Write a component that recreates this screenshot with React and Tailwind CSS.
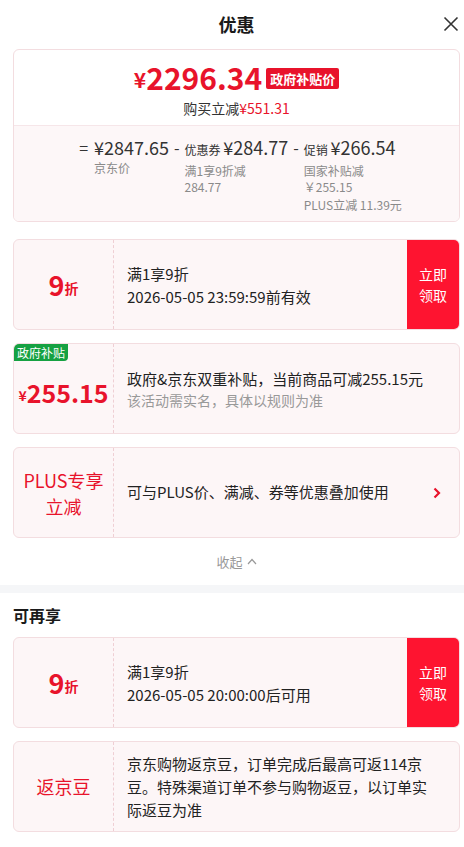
import React from 'react';

const RED = 'text-[#e8132b]';

const CouponCard = ({ time }) => (
  <div className="flex h-[91px] rounded-[6px] border border-[#f3dde0] bg-[#fdf6f7] overflow-hidden">
    <div className="w-[100px] shrink-0 flex items-center justify-center border-r border-dashed border-[#efcfd4]">
      <span className={`${RED} font-bold text-[27px] leading-none`}>9</span>
      <span className={`${RED} font-bold text-[14px] leading-none mt-[6px]`}>折</span>
    </div>
    <div className="flex-1 flex flex-col justify-center pl-[13px] text-[15px] leading-[23px] text-[#222]">
      <div>满1享9折</div>
      <div>{time}</div>
    </div>
    <div className="w-[52px] shrink-0 bg-[#fe1430] flex items-center justify-center text-white text-[14px] leading-[21px] text-center">
      <div>
        <div>立即</div>
        <div>领取</div>
      </div>
    </div>
  </div>
);

export default function App() {
  return (
    <div className="w-[464px] bg-white font-['Noto_Sans_CJK_SC',sans-serif] text-[#222]">
      <div className="pl-[13px] pr-[4px]">
        {/* header */}
        <div className="relative h-[49px] flex items-center justify-center">
          <span className="text-[18px] font-bold text-[#1a1a1a]">优惠</span>
          <svg className="absolute right-[1px] top-[16px]" width="16" height="16" viewBox="0 0 16 16" fill="none" stroke="#333" strokeWidth="1.6">
            <path d="M1.5 1.5 L14.5 14.5 M14.5 1.5 L1.5 14.5" />
          </svg>
        </div>

        {/* summary */}
        <div className="rounded-[6px] border border-[#f3dde0] overflow-hidden">
          <div className="h-[75px] flex flex-col items-center pt-[6px]">
            <div className="flex items-center h-[42px]">
              <span className={`${RED} font-bold text-[21px] leading-[42px] mt-[3px]`}>¥</span>
              <span className={`${RED} font-bold text-[30px] leading-[42px]`}>2296.34</span>
              <span className="ml-[4px] mt-[2px] bg-[#e8132b] text-white text-[13px] font-bold leading-[21px] px-[4px] rounded-[2px]">政府补贴价</span>
            </div>
            <div className="text-[14px] leading-[20px] text-[#333]">
              购买立减<span className={RED}>¥551.31</span>
            </div>
          </div>
          <div className="h-[96px] bg-[#fdf7f8] border-t border-[#f6e6e9] flex justify-center pt-[8px] pl-[8px]">
            <div className="flex">
              <span className="text-[16px] text-[#333] leading-[26px] mr-[6px]">=</span>
              <div>
                <div className="text-[18px] leading-[26px] text-[#333]">¥2847.65</div>
                <div className="text-[12px] leading-[16px] text-[#8a8a8a]">京东价</div>
              </div>
            </div>
            <div className="flex ml-[5px]">
              <span className="text-[16px] text-[#333] leading-[26px] mr-[5px]">-</span>
              <div>
                <div className="leading-[26px] text-[#333]">
                  <span className="text-[12px]">优惠券 </span>
                  <span className="text-[18px]">¥284.77</span>
                </div>
                <div className="text-[12px] leading-[16px] text-[#8a8a8a]">满1享9折减</div>
                <div className="text-[12px] leading-[16px] text-[#8a8a8a]">284.77</div>
              </div>
            </div>
            <div className="flex ml-[5px]">
              <span className="text-[16px] text-[#333] leading-[26px] mr-[5px]">-</span>
              <div>
                <div className="leading-[26px] text-[#333]">
                  <span className="text-[12px]">促销 </span>
                  <span className="text-[18px]">¥266.54</span>
                </div>
                <div className="text-[12px] leading-[16px] text-[#8a8a8a]">国家补贴减</div>
                <div className="text-[12px] leading-[16px] text-[#8a8a8a]">￥255.15</div>
                <div className="text-[12px] leading-[16px] text-[#8a8a8a] mt-[2px]">PLUS立减 11.39元</div>
              </div>
            </div>
          </div>
        </div>

        <div className="mt-[17px] flex flex-col gap-[13px]">
          <CouponCard time="2026-05-05 23:59:59前有效" />

          <div className="relative flex h-[91px] rounded-[6px] border border-[#f3dde0] bg-[#fdf6f7] overflow-hidden">
            <span className="absolute left-0 top-0 bg-[#16a142] text-white text-[12px] leading-[17px] px-[3px] rounded-br-[4px]">政府补贴</span>
            <div className="w-[100px] shrink-0 flex items-center justify-center border-r border-dashed border-[#efcfd4] pt-[8px]">
              <span className={`${RED} font-bold text-[14px] leading-none mt-[4px]`}>¥</span>
              <span className={`${RED} font-bold text-[25px] leading-none`}>255.15</span>
            </div>
            <div className="flex-1 flex flex-col justify-center pl-[13px] pt-[2px]">
              <div className="text-[15px] leading-[22px] text-[#222] whitespace-nowrap">政府&京东双重补贴，当前商品可减255.15元</div>
              <div className="text-[14px] leading-[21px] text-[#999]">该活动需实名，具体以规则为准</div>
            </div>
          </div>

          <div className="flex h-[91px] rounded-[6px] border border-[#f3dde0] bg-[#fdf6f7] overflow-hidden">
            <div className={`w-[100px] shrink-0 flex items-center justify-center border-r border-dashed border-[#efcfd4] text-center text-[18px] leading-[26px] ${RED}`}>
              PLUS专享<br />立减
            </div>
            <div className="flex-1 flex items-center pl-[13px] text-[15px] text-[#222]">
              可与PLUS价、满减、券等优惠叠加使用
            </div>
            <div className="w-[26px] flex items-center">
              <svg width="8" height="12" viewBox="0 0 8 12" fill="none" stroke="#e8132b" strokeWidth="2.2">
                <path d="M1.5 1.5 L6 6 L1.5 10.5" />
              </svg>
            </div>
          </div>
        </div>

        <div className="h-[47px] flex items-center justify-center text-[13px] text-[#999] gap-[4px]">
          <span>收起</span>
          <svg width="10" height="7" viewBox="0 0 10 7" fill="none" stroke="#999" strokeWidth="1.2">
            <path d="M1 6 L5 1.5 L9 6" />
          </svg>
        </div>
      </div>

      <div className="h-[8px] bg-[#f5f6f8]" />

      <div className="pl-[13px] pr-[4px]">
        <div className="h-[44px] flex items-center text-[16px] font-bold text-[#1a1a1a]">可再享</div>
        <div className="flex flex-col gap-[13px] pb-[16px]">
          <CouponCard time="2026-05-05 20:00:00后可用" />
          <div className="flex h-[91px] rounded-[6px] border border-[#f3dde0] bg-[#fdf6f7] overflow-hidden">
            <div className={`w-[100px] shrink-0 flex items-center justify-center border-r border-dashed border-[#efcfd4] text-[18px] ${RED}`}>
              返京豆
            </div>
            <div className="flex-1 flex items-center pl-[13px] pr-[22px] text-[15px] leading-[23px] text-[#222]">
              京东购物返京豆，订单完成后最高可返114京豆。特殊渠道订单不参与购物返豆，以订单实际返豆为准
            </div>
          </div>
        </div>
      </div>
    </div>
  );
}
